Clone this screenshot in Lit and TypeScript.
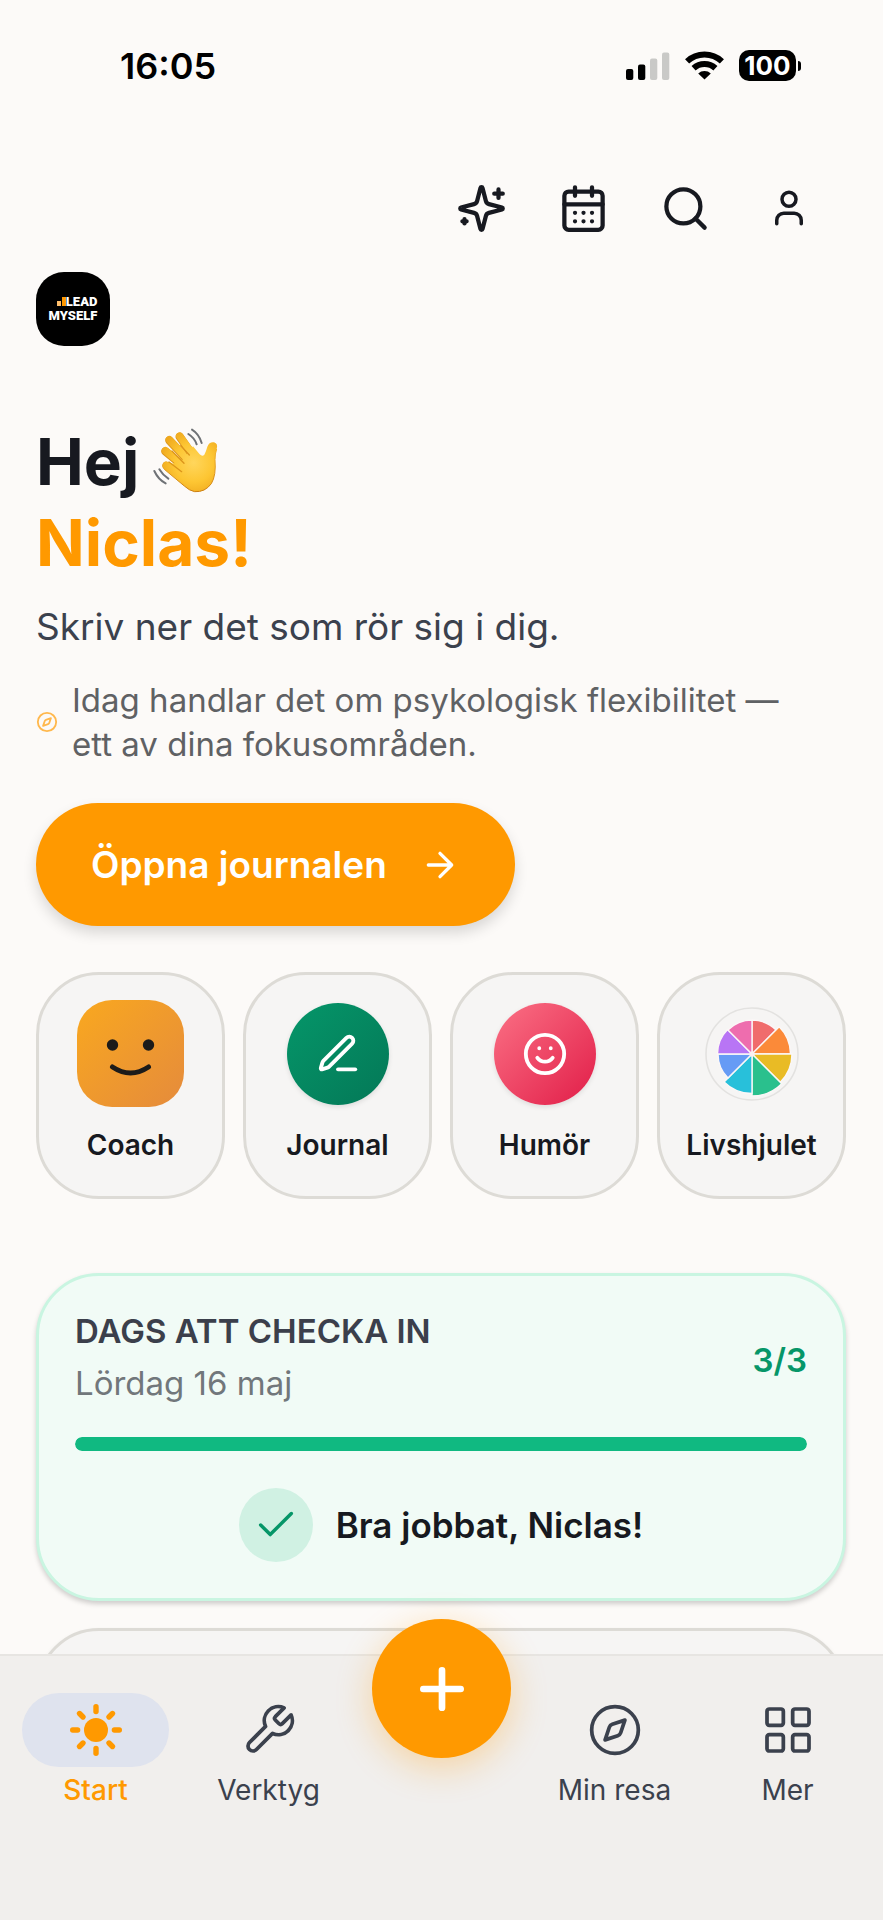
import { LitElement, html, svg, css } from "lit";
import { customElement, property } from "lit/decorators.js";

const sparkles = svg`
  <path d="M9.937 15.5A2 2 0 0 0 8.5 14.063l-6.135-1.582a.5.5 0 0 1 0-.962L8.5 9.936A2 2 0 0 0 9.937 8.5l1.582-6.135a.5.5 0 0 1 .963 0L14.063 8.5A2 2 0 0 0 15.5 9.937l6.135 1.581a.5.5 0 0 1 0 .964L15.5 14.063a2 2 0 0 0-1.437 1.437l-1.582 6.135a.5.5 0 0 1-.963 0z"/>
  <path d="M20 3v4M22 5h-4M4 17v2M5 18H3"/>`;
const calendar = svg`
  <path d="M8 2v4M16 2v4M3 10h18"/><rect x="3" y="4" width="18" height="18" rx="2"/>
  <path d="M8 14h.01M12 14h.01M16 14h.01M8 18h.01M12 18h.01M16 18h.01"/>`;
const search = svg`<circle cx="11" cy="11" r="8"/><path d="m21 21-4.3-4.3"/>`;
const user = svg`<path d="M19 21v-2a4 4 0 0 0-4-4H9a4 4 0 0 0-4 4v2"/><circle cx="12" cy="7" r="4"/>`;
const compass = svg`<circle cx="12" cy="12" r="10"/><path d="m16.24 7.76-1.8 5.41a2 2 0 0 1-1.27 1.27l-5.41 1.8 1.8-5.41a2 2 0 0 1 1.27-1.27z"/>`;
const arrow = svg`<path d="M5 12h14M12 5l7 7-7 7"/>`;
const pen = svg`<path d="M12 20h9"/><path d="M16.376 3.622a1 1 0 0 1 3.002 3.002L7.368 18.635a2 2 0 0 1-.855.506l-2.872.838a.5.5 0 0 1-.62-.62l.838-2.872a2 2 0 0 1 .506-.854z"/>`;
const smile = svg`<circle cx="12" cy="12" r="10"/><path d="M8 14s1.5 2 4 2 4-2 4-2M9 9h.01M15 9h.01"/>`;
const check = svg`<path d="M20 6 9 17l-5-5"/>`;
const wrench = svg`<path d="M14.7 6.3a1 1 0 0 0 0 1.4l1.6 1.6a1 1 0 0 0 1.4 0l3.77-3.77a6 6 0 0 1-7.94 7.94l-6.91 6.91a2.12 2.12 0 0 1-3-3l6.91-6.91a6 6 0 0 1 7.94-7.94l-3.76 3.76z"/>`;
const grid = svg`<rect x="3" y="3" width="7" height="7" rx="1"/><rect x="14" y="3" width="7" height="7" rx="1"/><rect x="14" y="14" width="7" height="7" rx="1"/><rect x="3" y="14" width="7" height="7" rx="1"/>`;
const plus = svg`<path d="M5 12h14M12 5v14"/>`;

const line = (shape: unknown, size: number, weight = 2) => html`
  <svg class="line" width=${size} height=${size} viewBox="0 0 24 24" fill="none" stroke="currentColor"
    stroke-width=${weight} stroke-linecap="round" stroke-linejoin="round" aria-hidden="true">${shape}</svg>`;

const sun = html`
  <svg class="line" width="56" height="56" viewBox="-28 -28 56 56" stroke="currentColor" stroke-width="5.4" stroke-linecap="round" aria-hidden="true">
    <circle r="12" fill="currentColor" stroke="none"/>
    ${[0, 45, 90, 135, 180, 225, 270, 315].map((a) => svg`<path d="M0 -18.4V-23.3" transform="rotate(${a})"/>`)}
  </svg>`;

const areas = [
  { color: "#f06c6c", r: 34 }, { color: "#fb8a39", r: 38.5 },
  { color: "#e9bb25", r: 40 }, { color: "#2ac08d", r: 42 },
  { color: "#28c0da", r: 39.5 }, { color: "#669bf5", r: 34 },
  { color: "#b875f5", r: 34.5 }, { color: "#ee6dae", r: 34 },
];

function slice(i: number, r: number) {
  const p = (k: number) => {
    const a = (k * Math.PI) / 4;
    return `${(r * Math.sin(a)).toFixed(2)} ${(-r * Math.cos(a)).toFixed(2)}`;
  };
  return `M0 0L${p(i)}A${r} ${r} 0 0 1 ${p(i + 1)}Z`;
}

const wheel = html`
  <svg class="line" width="96" height="96" viewBox="-48 -48 96 96" aria-hidden="true">
    <circle r="46" fill="none" stroke="#e3e2e0" stroke-width="1.6"/>
    ${areas.map((a, i) => svg`<path d=${slice(i, a.r)} fill=${a.color} stroke="#fbf7f7" stroke-width="1.4"/>`)}
    <circle r="2.6" fill="#fbf0f2"/>
  </svg>`;

const coach = html`
  <svg class="line" width="107" height="107" viewBox="0 0 107 107" aria-hidden="true">
    <defs><linearGradient id="coach" x1="0" y1="0" x2="1" y2="1">
      <stop offset="0" stop-color="#f9a81f"/><stop offset="1" stop-color="#e58b3c"/>
    </linearGradient></defs>
    <rect width="107" height="107" rx="35" fill="url(#coach)"/>
    <circle cx="35.5" cy="45" r="5.7" fill="#1c1b1a"/><circle cx="71.5" cy="45" r="5.7" fill="#1c1b1a"/>
    <path d="M35.5 67Q53.5 79 71.5 67" fill="none" stroke="#1c1b1a" stroke-width="5" stroke-linecap="round"/>
  </svg>`;

const wave = html`
  <svg class="wave" width="76" height="76" viewBox="0 0 228 228" role="img" aria-label="vinkande hand">
    <defs>
      <radialGradient id="skin" gradientUnits="userSpaceOnUse" cx="140" cy="125" r="105">
        <stop offset="0" stop-color="#ffd65c"/><stop offset=".55" stop-color="#fdc633"/><stop offset="1" stop-color="#efa81d"/>
      </radialGradient>
      <linearGradient id="edge" x1="0" y1="0" x2="0" y2="1">
        <stop offset="0" stop-color="#f2b32c"/><stop offset="1" stop-color="#cc7f12"/>
      </linearGradient>
    </defs>
    <g fill="none" stroke-linecap="round">
      <path d="M134 170L58 134" stroke="#dc951b" stroke-width="25"/>
      <path d="M134 168L58 133" stroke="url(#skin)" stroke-width="22"/>
      <path d="M134 156L55 91" stroke="#dc951b" stroke-width="25"/>
      <path d="M134 154L55 89" stroke="url(#skin)" stroke-width="22"/>
      <path d="M142 138L67 58" stroke="#dc951b" stroke-width="25"/>
      <path d="M142 136L67 56" stroke="url(#skin)" stroke-width="22"/>
      <path d="M152 124L98 47" stroke="#dc951b" stroke-width="25"/>
      <path d="M152 122L98 45" stroke="url(#skin)" stroke-width="22"/>
    </g>
    <path d="M102 122L138 76L158 100Q166 108 172 101Q177 92 181 77Q187 62 201 64Q214 68 209 84Q204 98 204 116Q208 163 193 188Q174 214 143 212Q127 209 112 195L50 143L70 129Z" fill="url(#skin)"/>
    <path d="M209 84Q204 98 204 116Q208 163 193 188Q174 214 143 212Q127 209 112 195L52 145" fill="none" stroke="url(#edge)" stroke-width="3"/>
    <path d="M104 152L66 123M111 127L75 90M127 102L101 74" fill="none" stroke="#dc951b" stroke-width="4" stroke-linecap="round"/>
    <g fill="none" stroke="#6f7276" stroke-width="6" stroke-linecap="round">
      <path d="M124 39Q142 50 149 70M135 26Q156 39 164 66M37 145Q47 162 64 173M22 150Q34 176 56 187"/>
    </g>
  </svg>`;

const fontStack = css`"Inter", "Noto Sans", sans-serif`;

@customElement("status-bar")
class StatusBar extends LitElement {
  static styles = css`
    :host { display: flex; align-items: center; justify-content: space-between; height: 131px; padding: 0 82px 0 120px; color: #000; }
    .time { font: 600 36px/44px ${fontStack}; }
    .state { display: flex; align-items: center; gap: 15px; }
    .battery { display: flex; align-items: center; gap: 2px; }
    .level { display: grid; place-items: center; width: 57px; height: 31px; border-radius: 10px; background: #000; color: #fff; font: 700 26px/31px ${fontStack}; }
    .cap { width: 3px; height: 10px; border-radius: 0 3px 3px 0; background: #000; }
  `;
  render() {
    return html`
      <span class="time">16:05</span>
      <div class="state">
        <svg width="44" height="28" viewBox="0 0 44 28" aria-label="Signal">
          <rect y="17" width="7.3" height="11" rx="2"/><rect x="12" y="12.6" width="7.3" height="15.4" rx="2"/>
          <g fill="#c9c9c7"><rect x="24" y="6.6" width="7.3" height="21.4" rx="2"/><rect x="36" y="0.6" width="7.3" height="27.4" rx="2"/></g>
        </svg>
        <svg width="39" height="29" viewBox="0 0 39 29" aria-label="Wi-Fi">
          <g fill="none" stroke="#000" stroke-width="6"><path d="M2.1 10.4A25.5 25.5 0 0 1 36.9 10.4M8.6 17.3A16 16 0 0 1 30.4 17.3"/></g>
          <path d="M19.5 28.6L13.2 22.4A9.2 9.2 0 0 1 25.8 22.4Z"/>
        </svg>
        <div class="battery"><span class="level">100</span><span class="cap"></span></div>
      </div>`;
  }
}

@customElement("quick-tile")
class QuickTile extends LitElement {
  @property() label = "";
  static styles = css`
    :host { display: block; min-width: 0; }
    .tile { display: flex; flex-direction: column; align-items: center; gap: 20px; box-sizing: border-box; width: 100%; padding: 25px 0 33px; border: 3px solid #dddbd6; border-radius: 63px; background: #f6f5f4; color: #171920; font: 600 28px/36px ${fontStack}; text-decoration: none; }
    .art { display: grid; place-items: center; height: 107px; }
  `;
  render() {
    return html`<a class="tile" href="#"><span class="art"><slot></slot></span>${this.label}</a>`;
  }
}

@customElement("check-in-card")
class CheckInCard extends LitElement {
  @property({ type: Number }) done = 3;
  @property({ type: Number }) total = 3;
  static styles = css`
    :host { display: block; }
    .card { padding: 32px 36px 36px; border: 3px solid #c9f5e1; border-radius: 63px; background: #f1fbf6; box-shadow: 0 3px 5px rgba(0, 0, 0, 0.18); }
    .head { display: flex; align-items: center; justify-content: space-between; }
    .title { margin: 0; color: #3b3f4b; font: 600 33px/46px ${fontStack}; text-transform: uppercase; }
    .date { margin: 0; color: #71777b; font: 400 33px/58px ${fontStack}; }
    .count { color: #069668; font: 600 33px/48px ${fontStack}; }
    .bar { display: block; width: 100%; height: 14px; margin: 25px 0 37px; border: 0; border-radius: 7px; overflow: hidden; appearance: none; background: #d0f1e2; }
    .bar::-webkit-progress-bar { background: #d0f1e2; }
    .bar::-webkit-progress-value { background: #10b981; border-radius: 7px; }
    .praise { display: flex; align-items: center; justify-content: center; gap: 23px; color: #171920; font: 600 35px/48px ${fontStack}; }
    .badge { display: grid; place-items: center; width: 74px; height: 74px; border-radius: 50%; background: #d0f1e3; color: #069668; }
  `;
  render() {
    return html`
      <section class="card">
        <div class="head">
          <div><h2 class="title">Dags att checka in</h2><p class="date">Lördag 16 maj</p></div>
          <span class="count">${this.done}/${this.total}</span>
        </div>
        <progress class="bar" aria-label="Dagens incheckningar" max=${this.total} value=${this.done}></progress>
        <div class="praise"><span class="badge">${line(check, 46, 1.8)}</span>Bra jobbat, Niclas!</div>
      </section>`;
  }
}

@customElement("tab-bar")
class TabBar extends LitElement {
  static styles = css`
    :host { display: block; position: relative; }
    .bar { display: grid; grid-template-columns: repeat(5, minmax(0, 1fr)); box-sizing: border-box; min-height: 266px; padding: 37px 9px 0; border-top: 2px solid #e7e5e2; background: #f1efed; }
    .tab { display: flex; flex-direction: column; align-items: center; gap: 3px; color: #3b414d; font: 400 28px/40px ${fontStack}; text-decoration: none; }
    .pill { display: grid; place-items: center; width: 147px; height: 74px; border-radius: 37px; }
    .active { color: #ff9900; font-weight: 500; }
    .active .pill { background: #dfe3ee; }
    .add { display: grid; place-items: center; justify-self: center; width: 139px; height: 139px; margin-top: -74px; padding: 0; border: 0; border-radius: 50%; background: #ff9900; color: #fff; box-shadow: 0 9px 36px rgba(255, 153, 0, 0.32); }
  `;
  tab(label: string, icon: unknown, active = false) {
    return html`<a class="tab ${active ? "active" : ""}" href="#"><span class="pill">${icon}</span>${label}</a>`;
  }
  render() {
    return html`
      <nav class="bar">
        ${this.tab("Start", sun, true)}
        ${this.tab("Verktyg", line(wrench, 56, 1.6))}
        <button class="add" aria-label="Lägg till">${line(plus, 64, 2.5)}</button>
        ${this.tab("Min resa", line(compass, 56, 1.6))}
        ${this.tab("Mer", line(grid, 56, 1.6))}
      </nav>`;
  }
}

@customElement("app-root")
class AppRoot extends LitElement {
  static styles = css`
    :host { display: flex; flex-direction: column; height: 100vh; background: #fcfaf8; color: #171920; font-family: ${fontStack}; }
    .page { flex: 1; min-height: 0; overflow-y: auto; scrollbar-width: none; }
    .tools { display: flex; justify-content: flex-end; padding: 26px 41px 13px; }
    .tool { display: grid; place-items: center; width: 102px; height: 102px; padding: 0; border: 0; background: none; color: #171920; }
    .profile { width: 106px; }
    .content { display: flex; flex-direction: column; padding: 0 37px 0 36px; }
    .logo { display: flex; flex-direction: column; align-items: center; justify-content: center; width: 74px; height: 74px; border-radius: 28px; background: #000; color: #fff; font: 900 13px/14px "Roboto", sans-serif; text-transform: uppercase; }
    .words { display: flex; flex-direction: column; align-items: flex-end; }
    .brand { display: flex; align-items: baseline; }
    .hello { margin: 75px 0 17px; font-size: 64px; line-height: 81px; font-weight: 700; }
    .greet { display: flex; align-items: flex-start; gap: 8px; height: 81px; }
    .name { display: block; color: #ff9900; }
    .lead { margin: 0 0 24px; color: #3b414d; font-size: 37px; line-height: 54px; }
    .focus { display: flex; align-items: center; gap: 14px; margin: 0 0 37px; padding-right: 32px; color: #5f6164; font-size: 33px; line-height: 44px; }
    .mark { flex: none; display: grid; color: #ffb84d; }
    .open { display: flex; align-items: center; justify-content: space-between; align-self: flex-start; gap: 18px; box-sizing: border-box; min-width: 479px; height: 123px; padding: 0 55px; border-radius: 62px; background: #ff9900; color: #fff; font-size: 37px; font-weight: 600; text-decoration: none; box-shadow: 0 7px 14px rgba(0, 0, 0, 0.14); }
    .tiles { display: grid; grid-template-columns: repeat(4, minmax(0, 1fr)); gap: 18px; margin: 46px 0 74px; }
    .disc { display: grid; place-items: center; width: 102px; height: 102px; border-radius: 50%; color: #fff; box-shadow: 0 2px 5px rgba(0, 0, 0, 0.1); }
    .journal { background: linear-gradient(135deg, #059669, #047857); }
    .mood { background: linear-gradient(135deg, #fb7185, #e11d48); }
    .next { min-height: 220px; margin-top: 27px; border: 3px solid #dddbd6; border-radius: 63px; background: #f6f5f4; box-shadow: 0 3px 5px rgba(0, 0, 0, 0.1); }
  `;
  render() {
    return html`
      <main class="page">
        <status-bar></status-bar>
        <div class="tools">
          <button class="tool" aria-label="Nyheter">${line(sparkles, 51)}</button>
          <button class="tool" aria-label="Kalender">${line(calendar, 51)}</button>
          <button class="tool" aria-label="Sök">${line(search, 51)}</button>
          <button class="tool profile" aria-label="Profil">${line(user, 42)}</button>
        </div>
        <div class="content">
          <div class="logo">
            <div class="words">
              <span class="brand"><svg width="9" height="9" viewBox="0 0 9 9" aria-hidden="true"><rect y="4" width="4" height="5" fill="#ffbe6b"/><rect x="5" width="4" height="9" fill="#ff9900"/></svg>Lead</span>
              <span>Myself</span>
            </div>
          </div>
          <h1 class="hello"><span class="greet">Hej ${wave}</span><span class="name">Niclas!</span></h1>
          <p class="lead">Skriv ner det som rör sig i dig.</p>
          <p class="focus"><span class="mark">${line(compass, 22)}</span><span>Idag handlar det om psykologisk flexibilitet — ett av dina fokusområden.</span></p>
          <a class="open" href="#">Öppna journalen ${line(arrow, 40, 2)}</a>
          <div class="tiles">
            <quick-tile label="Coach">${coach}</quick-tile>
            <quick-tile label="Journal"><span class="disc journal">${line(pen, 46)}</span></quick-tile>
            <quick-tile label="Humör"><span class="disc mood">${line(smile, 46)}</span></quick-tile>
            <quick-tile label="Livshjulet">${wheel}</quick-tile>
          </div>
          <check-in-card></check-in-card>
          <section class="next"></section>
        </div>
      </main>
      <tab-bar></tab-bar>`;
  }
}
